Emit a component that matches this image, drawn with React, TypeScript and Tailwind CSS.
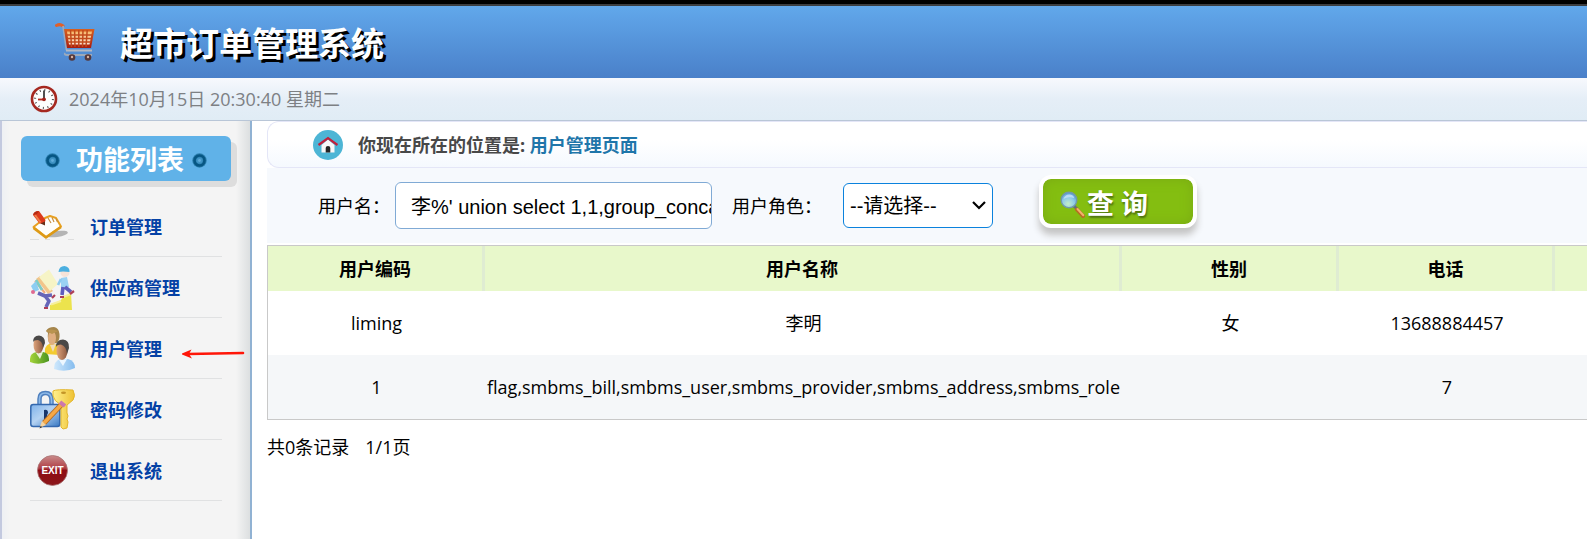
import { useState, type ReactNode } from "react";

function CartIcon() {
  return (
    <svg width="42" height="40" viewBox="0 0 42 40" aria-hidden="true">
      <defs>
        <linearGradient id="basket" x1="0" y1="0" x2="0" y2="1">
          <stop offset="0" stopColor="#d8601f" />
          <stop offset="1" stopColor="#a81d10" />
        </linearGradient>
        <linearGradient id="mesh" x1="0" y1="0" x2="0" y2="1">
          <stop offset="0" stopColor="#f6b96a" />
          <stop offset="1" stopColor="#fbe0d2" />
        </linearGradient>
      </defs>
      <path d="M1.500 2.500 Q5 0.500 8 3" fill="none" stroke="#e0602a" strokeWidth="3" strokeLinecap="round" />
      <path d="M8 3 L11.500 27 M10 30 Q9 32 12 32 H37" fill="none" stroke="#9aa9bd" strokeWidth="1.8" />
      <path d="M11 27.5 H37" stroke="#b4b8c2" strokeWidth="2" />
      <path d="M9 6 H39.5 L36 25 H12 Z" fill="url(#basket)" />
      <path d="M12 8.5 H37 L34.5 21.5 H14 Z" fill="url(#mesh)" />
      <path d="M12 12 H37 M12 15.5 H36 M13 19 H36 M15.5 7 L16.5 24 M19.6 7 L20 24 M23.8 7 V24 M28 7 L27.5 24 M32.2 7 L31 24" stroke="#c24a1c" strokeWidth="1.5" />
      <circle cx="17" cy="34.5" r="3.3" fill="#54383c" />
      <circle cx="33" cy="34.5" r="3.3" fill="#54383c" />
      <circle cx="17" cy="34" r="1.2" fill="#d8b3a0" />
      <circle cx="33" cy="34" r="1.2" fill="#d8b3a0" />
    </svg>
  );
}

function ClockIcon() {
  return (
    <svg width="28" height="28" viewBox="0 0 28 28" aria-hidden="true">
      <circle cx="14" cy="14" r="12" fill="#fdfdfd" stroke="#a52820" strokeWidth="2.6" />
      <circle cx="14" cy="14" r="8.9" fill="none" stroke="#555" strokeWidth="2" strokeDasharray="1.1 3.56" />
      <path d="M14 14.5 V5.5" stroke="#222" strokeWidth="1.6" />
      <path d="M14.5 14.5 H8" stroke="#b32a20" strokeWidth="1.8" />
      <circle cx="14" cy="14.3" r="1.9" fill="#a32019" />
    </svg>
  );
}

function RingDot() {
  return (
    <svg width="15" height="15" viewBox="0 0 15 15" aria-hidden="true">
      <circle cx="7.5" cy="7.5" r="7.2" fill="#2c7fae" />
      <circle cx="7.5" cy="7.5" r="5" fill="none" stroke="#065683" strokeWidth="2.6" />
      <circle cx="7.5" cy="7.5" r="3.1" fill="#3f93c4" />
      <circle cx="7.5" cy="7.5" r="1.4" fill="#62addb" />
    </svg>
  );
}

function OrderIcon() {
  return (
    <svg width="45" height="45" viewBox="0 0 45 45" aria-hidden="true">
      <ellipse cx="27" cy="29" rx="11" ry="3" fill="#b4b4b4" transform="rotate(-8 27 29)" />
      <path d="M0 34.500 H9 M15 34.500 H20 M38 34.500 H44" stroke="#dedede" />
      <path d="M3.500 22 L15 13 L20 11 L26 13 L31 21.500 L16 32 Z" fill="#fefefa" stroke="#e8a020" strokeWidth="2" strokeLinejoin="round" />
      <path d="M3.500 23 L16 32.500 L31 22" fill="none" stroke="#dd9a16" strokeWidth="2.400" strokeLinejoin="round" />
      <path d="M18 13 L21 18 M22 12.500 L24 17 M26 13.500 L27.500 17" stroke="#c98f3e" strokeWidth="1.200" />
      <path d="M3 10 Q4 6 9 6 L15.500 15 L14.500 19 L9.500 18.500 Z" fill="#dc3a1b" />
      <path d="M5 10 L10.500 17.500" stroke="#f0804a" strokeWidth="2" />
      <path d="M3 10 Q4 6 9 6 L7 9 Z" fill="#b52a12" />
      <path d="M10.500 18.500 L15 20.500 L15 16.500 Z" fill="#653017" />
    </svg>
  );
}

function SupplierIcon() {
  return (
    <svg width="45" height="45" viewBox="0 0 45 45" aria-hidden="true">
      <path d="M20 44 V39 L25 37 L31 34 L33 31 L41 27 L42 44 Z" fill="#ece34d" />
      <path d="M21 38.500 L31 35 M33 31 L41 28" stroke="#f6ef9a" strokeWidth="2" />
      <path d="M6 13 L10 10 L23 25 L18 28 Z" fill="#f2c58a" />
      <path d="M9 11 L19 3.500 L28 18 L20 25 Z" fill="#f6f4c6" />
      <path d="M5 15 L15 27" stroke="#f0a878" strokeWidth="2" />
      <path d="M6 14 L12 24" stroke="#7ccdc4" strokeWidth="2.600" />
      <path d="M1 20 L6 15 L9 24 L4 26 Z" fill="#8bcdf2" />
      <circle cx="3" cy="26" r="2" fill="#df6a91" />
      <path d="M8 27 L15 30 L22 29 M15 30 L19 35 L16 41" fill="none" stroke="#6565b8" strokeWidth="3.600" strokeLinejoin="round" />
      <path d="M14 42 L18 42 M22 32 L25 29" stroke="#ad3e58" strokeWidth="2.200" />
      <ellipse cx="35" cy="7" rx="4.500" ry="4" fill="#f6e3d8" />
      <path d="M28.500 6 Q29 0 34.500 0 Q40 1 39.500 6 L33 5.500 Z" fill="#4bafe0" />
      <path d="M31 12 L37 11 L39 21 L31 22 Z" fill="#9ad2f3" />
      <path d="M31 13 L28 19" stroke="#8ccbef" strokeWidth="2.600" />
      <path d="M33 21 L32 29 M35 21 L41 26" stroke="#5f5dbd" strokeWidth="3.600" />
      <path d="M30 31 H34 M40 28 L44 25" stroke="#ad3e58" strokeWidth="2.200" />
    </svg>
  );
}

function UsersIcon() {
  return (
    <svg width="45" height="45" viewBox="0 0 45 45" aria-hidden="true">
      <defs>
        <linearGradient id="skin">
          <stop offset="0" stopColor="#dfa47c" />
          <stop offset="1" stopColor="#8c5940" />
        </linearGradient>
        <linearGradient id="greenShirt">
          <stop offset="0" stopColor="#a6d43a" />
          <stop offset="1" stopColor="#4a9420" />
        </linearGradient>
        <linearGradient id="blueShirt">
          <stop offset="0" stopColor="#cfe8fc" />
          <stop offset="1" stopColor="#85bcee" />
        </linearGradient>
      </defs>
      <path d="M15 27 Q14 19 19 17 H27 Q31 20 30 28 Z" fill="#f3cb30" />
      <path d="M20 18 L23 25 L26 17 Z" fill="#f0dcc0" />
      <path d="M16 4 Q18 0 24 0 Q29 1 29.500 7 Q30 13 27 16 L20 17 Q17 13 18 6 Z" fill="#a5854b" />
      <ellipse cx="22" cy="11" rx="4" ry="7" fill="#dfae80" />
      <path d="M16 4 Q20 1 28 4 L22 7 Z" fill="#b9944f" />
      <path d="M0 35 V32 Q0 26 7 25 H13 Q19 26 19 32 V34 Q9 39 0 35 Z" fill="url(#greenShirt)" />
      <path d="M6 26 L10 32 L13 25 Z" fill="#e9f2d5" />
      <ellipse cx="8.500" cy="18" rx="5" ry="8.500" fill="url(#skin)" />
      <path d="M3 15 Q3 8.500 9 8.500 Q15 9 15 16 L13 21 Q12.500 14 8 13 Q4 13 3 15 Z" fill="#4a4847" />
      <path d="M24 42 Q24 34 30 32 H38 Q45 34 45 41 Q35 46 24 42 Z" fill="url(#blueShirt)" />
      <path d="M29 33 L33 39 L37 32 Z" fill="#edf7ff" />
      <ellipse cx="32" cy="24" rx="5.500" ry="9" fill="url(#skin)" />
      <path d="M26 20 Q26 12.500 33 12.500 Q39.500 13 39 21 L37 27 Q36.500 19 31 17.500 Q27 17.500 26 20 Z" fill="#4a4847" />
    </svg>
  );
}

function PasswordIcon() {
  return (
    <svg width="45" height="45" viewBox="0 0 45 45" aria-hidden="true">
      <defs>
        <linearGradient id="lock" x1="0" y1="0" x2="1" y2="1">
          <stop offset="0" stopColor="#7fb2ea" />
          <stop offset=".45" stopColor="#b4d2f2" />
          <stop offset="1" stopColor="#3778c2" />
        </linearGradient>
        <linearGradient id="gold">
          <stop offset="0" stopColor="#fff08e" />
          <stop offset="1" stopColor="#eec133" />
        </linearGradient>
      </defs>
      <path d="M9.500 18 V11 Q9.500 5 15.500 5 Q21.500 5 21.500 12 V18" fill="none" stroke="#4f80be" strokeWidth="4.500" />
      <path d="M9.500 18 V11 Q9.500 5 15.500 5 Q21.500 5 21.500 12 V18" fill="none" stroke="#8db9e8" strokeWidth="1.600" />
      <rect x=".8" y="16.500" width="29" height="22" rx="2.500" fill="url(#lock)" stroke="#3468ae" strokeWidth="1.500" />
      <path d="M14 22 Q18 21 18 25 L17 27 V33 H14 V27 Z" fill="#17356b" />
      <path d="M23 3 Q26 1 43 2 Q46 8 43 12 L37 17 V25 L38 28 L37 31 L38 34 L37 40 L33 41 L31 39 V17 Q24 13 23 8 Z" fill="url(#gold)" stroke="#e3b62c" />
      <ellipse cx="33.500" cy="4.800" rx="2.500" ry="1.300" fill="#c49527" />
      <path d="M31 17 L14 35" stroke="#b06a24" strokeWidth="5.400" />
      <path d="M31 17 L14 35" stroke="#f5a845" strokeWidth="3.600" />
      <path d="M30 14 L35 18" stroke="#cc77ae" strokeWidth="4" />
      <path d="M12 33 L16 37 L9.500 40 Z" fill="#f6d39c" />
      <path d="M10.500 38 L12.500 39 L9.500 40.500 Z" fill="#333" />
    </svg>
  );
}

function ExitIcon() {
  return (
    <svg width="45" height="45" viewBox="0 0 45 45" aria-hidden="true">
      <defs>
        <linearGradient id="exitBall" x1="0" y1="0" x2="0" y2="1">
          <stop offset="0" stopColor="#c98b8b" />
          <stop offset=".42" stopColor="#b04046" />
          <stop offset=".5" stopColor="#8e0b12" />
          <stop offset="1" stopColor="#8b171b" />
        </linearGradient>
      </defs>
      <circle cx="22.500" cy="21.500" r="15" fill="url(#exitBall)" stroke="#a87575" strokeWidth=".8" />
      <text x="22.500" y="25" textAnchor="middle" fontFamily="Liberation Sans, sans-serif" fontSize="10" fontWeight="700" fill="#fff">EXIT</text>
    </svg>
  );
}

function HomeIcon() {
  return (
    <svg width="30" height="30" viewBox="0 0 30 30" aria-hidden="true">
      <circle cx="15" cy="15" r="15" fill="#4db5d5" />
      <path d="M8.500 15 L15 9.500 L21.500 15 V22.500 H8.500 Z" fill="#f8f8f8" />
      <path d="M5.500 15 L15 8.200 L24.500 15" fill="none" stroke="#c1203c" strokeWidth="2.200" />
      <path d="M12.700 22.500 V18 Q12.700 16 15 16 Q17.300 16 17.300 18 V22.500 Z" fill="#252525" />
    </svg>
  );
}

function MagnifierIcon() {
  return (
    <svg width="25" height="27" viewBox="0 0 25 27" aria-hidden="true">
      <defs>
        <radialGradient id="lens" cx=".45" cy=".75" r=".8">
          <stop offset="0" stopColor="#c4efc6" />
          <stop offset=".5" stopColor="#8fcbe8" />
          <stop offset="1" stopColor="#4a8ed0" />
        </radialGradient>
      </defs>
      <path d="M14 15 L18 19" stroke="#626f7d" strokeWidth="3" />
      <path d="M17 18.500 L23 25" stroke="#b76c22" strokeWidth="4" strokeLinecap="round" />
      <path d="M17.500 18 L23.300 24.300" stroke="#f3b16c" strokeWidth="2" strokeLinecap="round" />
      <circle cx="9" cy="9" r="7.800" fill="url(#lens)" stroke="#7298aa" strokeWidth="1.400" />
      <path d="M3.500 8 Q5 3 10 3.500 Q14 4 14 7 Q8 5 3.500 8 Z" fill="#c9e4fb" opacity=".8" />
    </svg>
  );
}

function PointerArrow() {
  return (
    <svg className="absolute top-7 left-38" width="64" height="14" viewBox="0 0 64 14" aria-hidden="true">
      <path d="M6 8 L61 7" stroke="#ff1608" strokeWidth="2.600" strokeLinecap="round" />
      <path d="M-1 8 L9.500 3.500 L7 8 L10 12.500 Z" fill="#ff1608" />
    </svg>
  );
}

type MenuItem = { label: string; icon: ReactNode; marked?: boolean };

const menu: MenuItem[] = [
  { label: "订单管理", icon: <OrderIcon /> },
  { label: "供应商管理", icon: <SupplierIcon /> },
  { label: "用户管理", icon: <UsersIcon />, marked: true },
  { label: "密码修改", icon: <PasswordIcon /> },
  { label: "退出系统", icon: <ExitIcon /> },
];

const rows = [
  ["liming", "李明", "女", "13688884457", ""],
  ["1", "flag,smbms_bill,smbms_user,smbms_provider,smbms_address,smbms_role", "", "7", ""],
];

function Sidebar() {
  return (
    <aside className="w-[252px] shrink-0 border-r-2 border-l-2 border-r-[#91b2d3] border-l-[#c3c9df] bg-[linear-gradient(90deg,#eef0f4_0,#f4f4f4_8px,#f4f4f4_calc(100%-14px),#dcdfe0_100%)] pt-[15px]">
      <h2 className="mx-[19px] flex h-[45px] items-center justify-between rounded-md bg-[#60b2e8] px-6 pt-1 text-[27px] font-bold text-white shadow-[6px_6px_0_#dddddd]">
        <RingDot />
        <span className="pl-2">功能列表</span>
        <RingDot />
      </h2>
      <nav className="mx-[28px] mt-[15px]">
        <ul>
          {menu.map((item) => (
            <li key={item.label} className="relative border-b border-[#e0e1e2]">
              <a href="#" className="flex h-[60px] items-center gap-[15px] pt-0.5 text-lg font-bold text-[#0441a5]">
                {item.icon}
                {item.label}
              </a>
              {item.marked && <PointerArrow />}
            </li>
          ))}
        </ul>
      </nav>
    </aside>
  );
}

function SearchForm() {
  const [name, setName] = useState("李%' union select 1,1,group_concat(table_name)");
  return (
    <form className="flex h-[75px] items-center bg-[#f6f9fd] pl-[51px] text-lg" onSubmit={(e) => e.preventDefault()}>
      <label htmlFor="user-name" className="w-[77px] whitespace-nowrap">用户名：</label>
      <input
        id="user-name"
        value={name}
        onChange={(e) => setName(e.target.value)}
        className="h-[47px] w-[317px] rounded-md border border-[#80aad5] bg-white pl-[15px] font-['Liberation_Sans','Noto_Sans_CJK_SC',sans-serif] text-xl outline-none"
      />
      <label htmlFor="user-role" className="ml-5 w-[111px] whitespace-nowrap">用户角色：</label>
      <div className="relative">
        <select
          id="user-role"
          className="block h-[45px] w-[150px] appearance-none rounded-md border border-[#0b82dd] bg-white pl-[6px] font-['Liberation_Sans','Noto_Sans_CJK_SC',sans-serif] text-xl"
        >
          <option>--请选择--</option>
        </select>
        <svg className="pointer-events-none absolute top-[18px] right-[7px]" width="14" height="9" viewBox="0 0 14 9" aria-hidden="true">
          <path d="M1 1 L7 7 L13 1" fill="none" stroke="#000" strokeWidth="2.200" />
        </svg>
      </div>
      <button
        type="submit"
        className="mb-[9px] ml-[46px] flex h-[53px] w-[158px] items-center gap-0.5 rounded-xl border-4 border-white bg-[#84be11] bg-clip-padding pt-1.5 pl-[17px] text-[27px] font-bold text-white shadow-[0_7px_7px_#c4c4c4,inset_0_0_12px_#79aa13] [text-shadow:1px_2px_2px_#4c7010]"
      >
        <MagnifierIcon />
        <span>查 询</span>
      </button>
    </form>
  );
}

function UserTable() {
  return (
    <table className="mt-0.5 w-full table-fixed border-separate border-spacing-0 border border-r-0 border-[#c9c9c9] text-center text-lg">
      <colgroup>
        <col className="w-[217px]" />
        <col />
        <col className="w-[217px]" />
        <col className="w-[216px]" />
        <col className="w-[32px]" />
      </colgroup>
      <thead>
        <tr className="h-[45px] bg-[#e8f8cb]">
          {["用户编码", "用户名称", "性别", "电话"].map((h) => (
            <th key={h} className="border-r-[3px] border-[#dfecd2] p-0 font-bold">{h}</th>
          ))}
          <td />
        </tr>
      </thead>
      <tbody>
        {rows.map((row) => (
          <tr key={row[0]} className="h-16 odd:bg-white even:bg-[#f5f7f9]">
            {row.map((cell, i) => (
              <td key={i} className="p-0 whitespace-nowrap">{cell}</td>
            ))}
          </tr>
        ))}
      </tbody>
    </table>
  );
}

export default function App() {
  return (
    <div className="flex min-h-screen flex-col overflow-x-hidden bg-white font-['Open_Sans','Noto_Sans_CJK_SC',sans-serif] text-black">
      <header className="flex h-[78px] items-center border-t-4 border-black bg-linear-to-b from-[#62a9ec] to-[#4a80c9] pt-1 pl-[55px] shadow-[inset_0_2px_0_#3b3d40]">
        <CartIcon />
        <h1 className="ml-[23px] pt-0.5 text-[33px] font-bold text-white [text-shadow:3px_3px_0_#000]">超市订单管理系统</h1>
      </header>
      <div className="flex h-[43px] items-center gap-[11px] border-b border-[#b9c6d7] bg-linear-to-b from-[#f7f9fd] via-[#e5eef7] to-[#e0ecf5] pl-[30px] text-lg text-[#7d8084]">
        <ClockIcon />
        <time>2024年10月15日 20:30:40 星期二</time>
      </div>
      <div className="flex grow">
        <Sidebar />
        <main className="min-w-0 grow pl-[15px]">
          <div className="flex h-[47px] items-center rounded-l-xl border border-r-0 border-[#e4e6f7] bg-linear-to-b from-white from-40% to-[#f5f9fe] pl-[45px] text-lg font-bold text-[#484848]">
            <HomeIcon />
            <p className="ml-[15px]">
              你现在所在的位置是: <span className="text-[#1f76aa]">用户管理页面</span>
            </p>
          </div>
          <SearchForm />
          <UserTable />
          <p className="mt-[13px] flex gap-4 text-lg">
            <span>共0条记录</span>
            <span>1/1页</span>
          </p>
        </main>
      </div>
    </div>
  );
}
